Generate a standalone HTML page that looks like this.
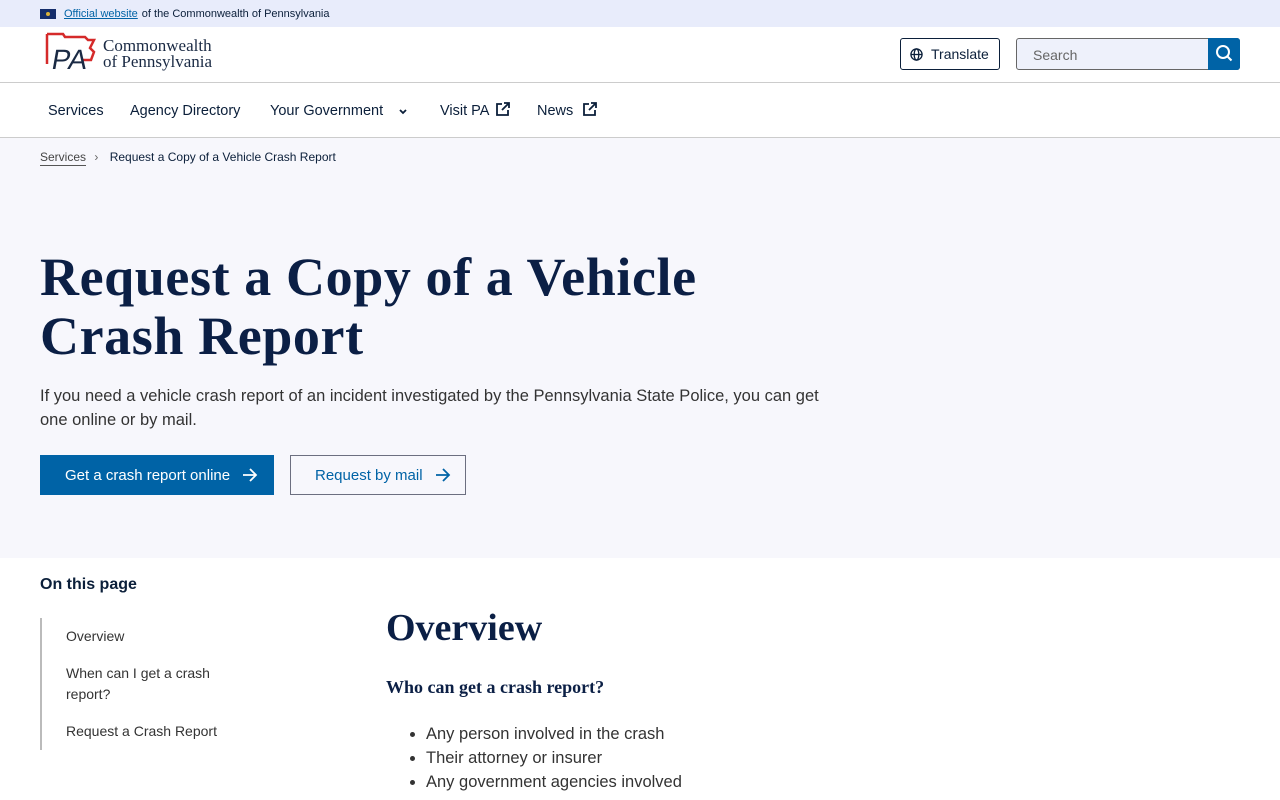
<!DOCTYPE html>
<html><head><meta charset="utf-8"><style>
*{box-sizing:border-box;margin:0;padding:0}
body{width:1280px;height:800px;overflow:hidden;font-family:"Liberation Sans",sans-serif;color:#0b1f3a;background:#fff}
.top{height:27px;background:#e8ecfb;font-size:11px;display:flex;align-items:center;padding-left:40px;color:#0b1f3a}
.flag{width:16px;height:10px;background:#142d6b;margin-right:8px;position:relative}
.flag:after{content:"";position:absolute;left:6px;top:3px;width:4px;height:4px;background:#d8b23a;border-radius:50%}
.top a{color:#0063a6;text-decoration:underline;margin-right:4px}
.hdr{height:56px;border-bottom:1px solid #ccc;position:relative}
.logo{position:absolute;left:44px;top:5px}
.lt{position:absolute;left:103px;top:11px;font-family:"Liberation Serif",serif;font-size:17px;line-height:16px;color:#1a2a44}
.tr{position:absolute;left:900px;top:11px;width:100px;height:32px;border:1px solid #0b1f3a;border-radius:3px;font-size:14px;display:flex;align-items:center;padding-left:30px}
.tr svg{position:absolute;left:9px;top:9px}
.sr{position:absolute;left:1016px;top:11px;width:224px;height:32px;border:1px solid #666;border-radius:3px;background:#eef1fb;font-size:14px;color:#666;padding:8px 16px}
.sb{position:absolute;right:-1px;top:-1px;width:32px;height:32px;background:#0063a6;border-radius:0 3px 3px 0}
.nav{height:55px;border-bottom:1px solid #ccc;font-size:14.5px;position:relative}
.nav span{position:absolute;top:20px}
.hero{background:#f7f7fc;height:420px;position:relative}
.bc{position:absolute;top:12px;left:40px;font-size:12px}
.bc u{text-decoration:none;border-bottom:1px solid #555;color:#444;padding-bottom:1px}
h1{position:absolute;left:40px;top:110px;font-family:"Liberation Serif",serif;font-weight:bold;font-size:54px;line-height:59px;color:#0b1f45;letter-spacing:0.6px}
.lead{position:absolute;left:40px;top:246px;font-size:16.5px;line-height:24px;color:#333;width:800px}
.b1{position:absolute;left:40px;top:317px;width:234px;height:40px;background:#0063a6;color:#fff;font-size:15px;display:flex;align-items:center;padding-left:25px}
.b2{position:absolute;left:290px;top:317px;width:176px;height:40px;border:1px solid #6c6f80;color:#0063a6;font-size:15px;display:flex;align-items:center;padding-left:24px}
.b1 svg,.b2 svg{margin-left:12px}
.otp{position:absolute;left:40px;top:576px;font-weight:bold;font-size:16px}
.toc{position:absolute;left:40px;top:618px;border-left:2px solid #bbb;height:132px;width:220px;font-size:14px;color:#333}
.toc div{position:absolute;left:24px;line-height:21px}
h2{position:absolute;left:386px;top:606px;font-family:"Liberation Serif",serif;font-weight:bold;font-size:38px;color:#0b1f45}
h3{position:absolute;left:386px;top:677px;font-family:"Liberation Serif",serif;font-weight:bold;font-size:18px;color:#0b1f45}
ul{position:absolute;left:426px;top:722px;font-size:16.5px;line-height:24px;color:#333}
</style></head><body>
<div class="top"><div class="flag"></div><a>Official website</a> of the Commonwealth of Pennsylvania</div>
<div class="hdr">
<svg class="logo" width="54" height="42" viewBox="0 0 54 42"><path d="M3 2v30M3 2h16l2 3h20l3 3h6l-4 8 4 4-3 8H38" fill="none" stroke="#d52a2a" stroke-width="2.5"/><text x="7" y="37" font-family="Liberation Sans" font-size="28" fill="#1a2a44" transform="skewX(-10) translate(6 0)">PA</text></svg>
<div class="lt">Commonwealth<br>of Pennsylvania</div>
<div class="tr"><svg width="13" height="13" viewBox="0 0 14 14" fill="none" stroke="#0b1f3a" stroke-width="1.4"><circle cx="7" cy="7" r="6"/><ellipse cx="7" cy="7" rx="2.5" ry="6"/><path d="M1 7h12"/></svg>Translate</div>
<div class="sr">Search<div class="sb"><svg width="32" height="32" viewBox="0 0 32 32" fill="none" stroke="#fff" stroke-width="2"><circle cx="15" cy="14" r="6"/><path d="M19.5 18.5l4 4"/></svg></div></div>
</div>
<div class="nav">
<span style="left:48px">Services</span><span style="left:130px">Agency Directory</span><span style="left:270px">Your Government</span>
<svg style="position:absolute;left:398px;top:25px" width="10" height="8" viewBox="0 0 10 8"><path d="M2 2l3 3 3-3" fill="none" stroke="#0b1f3a" stroke-width="1.8"/></svg>
<span style="left:440px">Visit PA</span>
<svg style="position:absolute;left:495px;top:18px" width="16" height="16" viewBox="0 0 16 16" fill="none" stroke="#0b1f3a" stroke-width="1.8"><path d="M7 3H2v11h11V9M9 2h5v5M14 2L7 9"/></svg>
<span style="left:537px">News</span>
<svg style="position:absolute;left:582px;top:18px" width="16" height="16" viewBox="0 0 16 16" fill="none" stroke="#0b1f3a" stroke-width="1.8"><path d="M7 3H2v11h11V9M9 2h5v5M14 2L7 9"/></svg>
</div>
<div class="hero">
<div class="bc"><u>Services</u> <span style="color:#666;margin:0 8px 0 5px">›</span> Request a Copy of a Vehicle Crash Report</div>
<h1>Request a Copy of a Vehicle<br>Crash Report</h1>
<div class="lead">If you need a vehicle crash report of an incident investigated by the Pennsylvania State Police, you can get one online or by mail.</div>
<div class="b1">Get a crash report online<svg width="16" height="14" viewBox="0 0 16 14" fill="none" stroke="#fff" stroke-width="1.8"><path d="M1 7h13M8 1l6 6-6 6"/></svg></div>
<div class="b2">Request by mail<svg width="16" height="14" viewBox="0 0 16 14" fill="none" stroke="#0063a6" stroke-width="1.8"><path d="M1 7h13M8 1l6 6-6 6"/></svg></div>
</div>
<div class="otp">On this page</div>
<div class="toc"><div style="top:8px">Overview</div><div style="top:45px">When can I get a crash<br>report?</div><div style="top:103px">Request a Crash Report</div></div>
<h2>Overview</h2>
<h3>Who can get a crash report?</h3>
<ul><li>Any person involved in the crash</li><li>Their attorney or insurer</li><li>Any government agencies involved</li></ul>
</body></html>
